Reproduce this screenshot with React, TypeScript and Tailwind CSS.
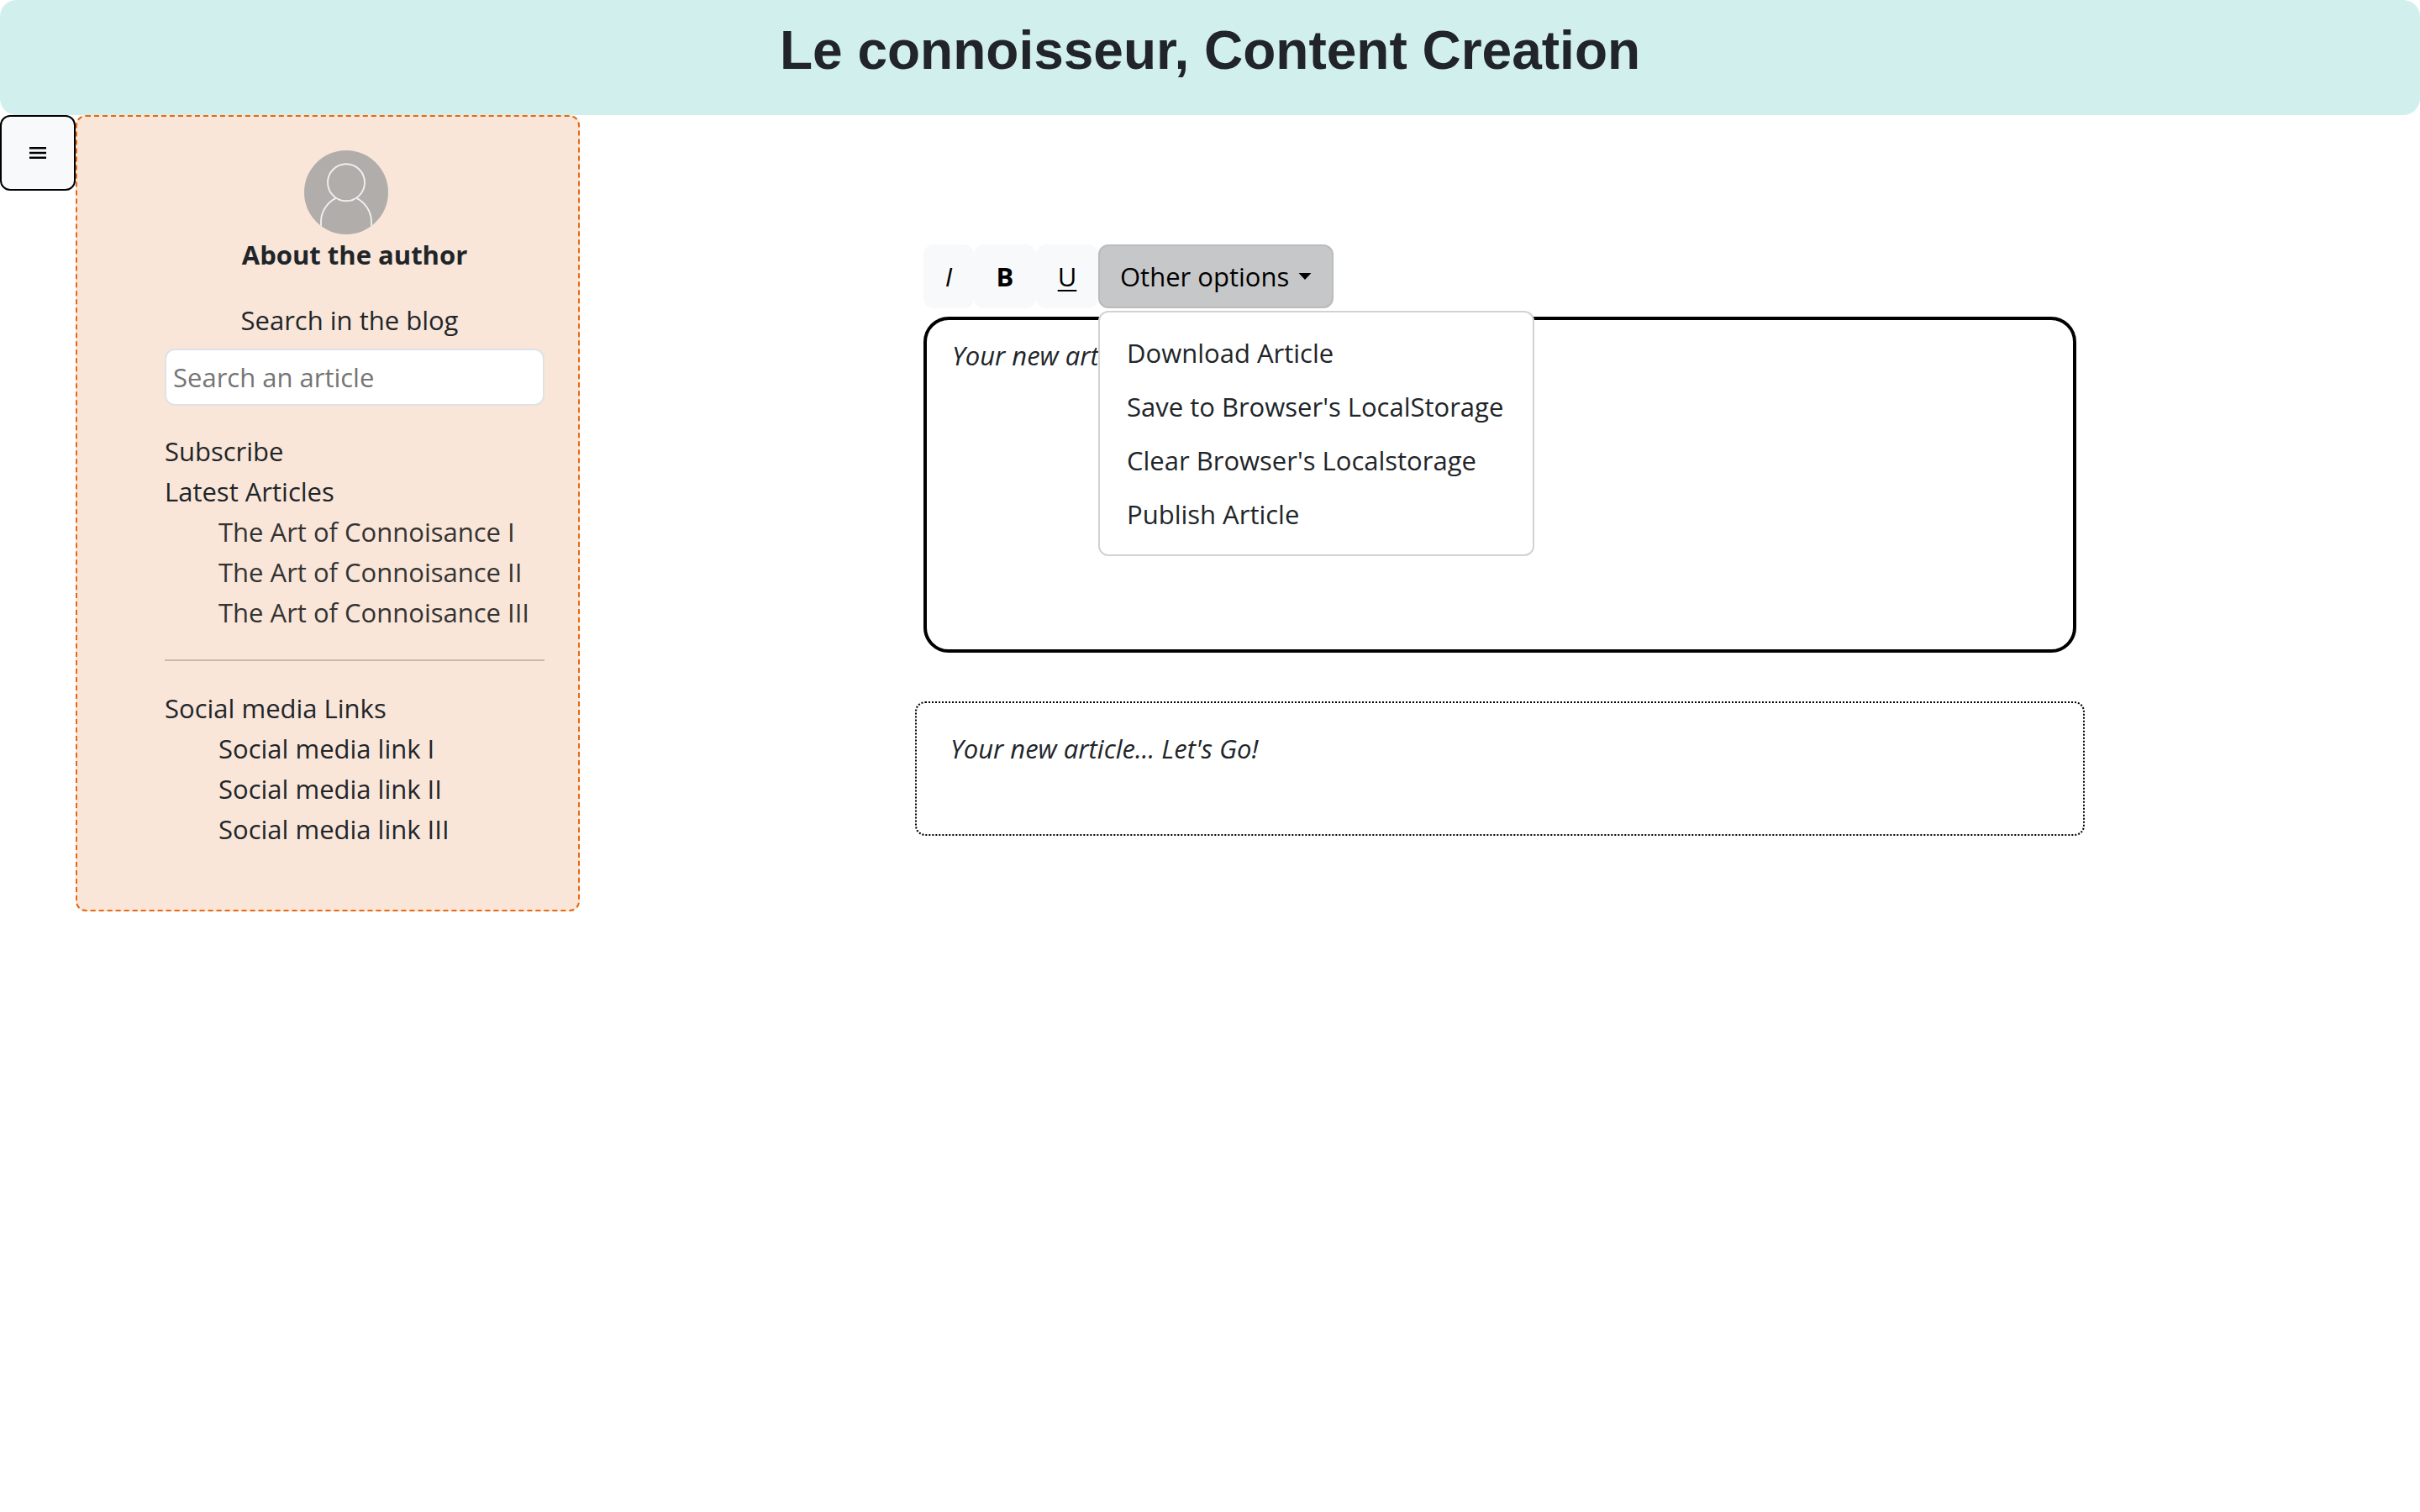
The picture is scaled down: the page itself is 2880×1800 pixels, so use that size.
import { useState } from "react";

const articles = [
  "The Art of Connoisance I",
  "The Art of Connoisance II",
  "The Art of Connoisance III",
];

const socialLinks = [
  "Social media link I",
  "Social media link II",
  "Social media link III",
];

const menuItems = [
  "Download Article",
  "Save to Browser's LocalStorage",
  "Clear Browser's Localstorage",
  "Publish Article",
];

function MenuIcon() {
  return (
    <svg width="20" height="14" viewBox="0 0 20 14" aria-hidden="true">
      <path d="M0 1.3H20M0 7H20M0 12.7H20" stroke="black" strokeWidth="2.4" />
    </svg>
  );
}

function Avatar() {
  return (
    <svg width="100" height="100" viewBox="0 0 100 100" aria-hidden="true">
      <defs>
        <clipPath id="avatar-disc">
          <circle cx="50" cy="50" r="50" />
        </clipPath>
      </defs>
      <g clipPath="url(#avatar-disc)">
        <rect width="100" height="100" fill="#b0adaa" />
        <g fill="none" stroke="#f1f0ef" strokeWidth="1.9">
          <circle cx="50" cy="38.3" r="22" />
          <path d="M38 56.7C27 62.5 20 73 20 85V100" />
          <path d="M62 56.7C73 62.5 80 73 80 85V100" />
        </g>
      </g>
    </svg>
  );
}

function Sidebar() {
  return (
    <aside className="w-[600px] shrink-0 rounded-xl border-2 border-dashed border-[#e8680f] bg-[#f9e6d9] p-10 pl-[104px]">
      <div className="flex flex-col items-center">
        <div className="pr-5">
          <Avatar />
        </div>
        <a href="#author" className="font-bold">
          About the author
        </a>
      </div>
      <form className="mt-[30px] flex flex-col" onSubmit={(e) => e.preventDefault()}>
        <label htmlFor="search" className="pr-3 text-center">
          Search in the blog
        </label>
        <input
          id="search"
          type="search"
          placeholder="Search an article"
          className="mt-2.5 h-[68px] w-full rounded-xl border-2 border-[#dee2e6] bg-white px-2 placeholder:text-[#757575]"
        />
      </form>
      <nav className="mt-[30px]">
        <a href="#subscribe" className="block">
          Subscribe
        </a>
        <p>Latest Articles</p>
        <ul className="pl-16 text-[#333333]">
          {articles.map((title) => (
            <li key={title} className="whitespace-nowrap">
              <a href="#article">{title}</a>
            </li>
          ))}
        </ul>
        <hr className="my-8 border-t-2 border-[#c8b9b0]" />
        <p>Social media Links</p>
        <ul className="mb-8 pl-16">
          {socialLinks.map((title) => (
            <li key={title}>
              <a href="#social">{title}</a>
            </li>
          ))}
        </ul>
      </nav>
    </aside>
  );
}

function Toolbar() {
  const [open, setOpen] = useState(true);
  return (
    <div className="flex h-[76px] text-black">
      <button type="button" className="w-15 rounded-xl bg-[#f8f9fa] italic">
        I
      </button>
      <button type="button" className="w-[74px] rounded-xl bg-[#f8f9fa] font-bold">
        B
      </button>
      <button
        type="button"
        className="w-[74px] rounded-xl bg-[#f8f9fa] underline decoration-2 underline-offset-4"
      >
        U
      </button>
      <div className="relative">
        <button
          type="button"
          aria-expanded={open}
          onClick={() => setOpen(!open)}
          className="flex h-full w-[280px] items-center justify-between rounded-xl border-2 border-[#babbbc] bg-[#c6c7c8] px-6"
        >
          Other options
          <svg width="16" height="8" viewBox="0 0 16 8" aria-hidden="true">
            <path d="M0.500 0H15.500L8 8Z" fill="black" />
          </svg>
        </button>
        {open && (
          <ul className="absolute top-full left-0 z-10 mt-[3px] w-[519px] rounded-xl border-2 border-[#d2d2d2] bg-white py-4 text-[#212529]">
            {menuItems.map((item) => (
              <li key={item}>
                <button type="button" className="w-full px-8 py-2 text-left whitespace-nowrap">
                  {item}
                </button>
              </li>
            ))}
          </ul>
        )}
      </div>
    </div>
  );
}

export default function App() {
  const [text, setText] = useState("Your new article... Let's Go!");
  return (
    <div className="min-h-screen bg-white font-['Open_Sans',sans-serif] text-[31px] leading-[48px] text-[#212529]">
      <header className="rounded-[20px] bg-[#d1efed] pt-[22px] pb-[38px] text-center">
        <h1 className="font-['Liberation_Sans',sans-serif] text-[64px] leading-[77px] font-bold">
          Le connoisseur, Content Creation
        </h1>
      </header>
      <div className="flex items-start">
        <button
          type="button"
          aria-label="Toggle sidebar"
          className="flex h-[90px] w-[90px] shrink-0 items-center justify-center rounded-xl border-2 border-black bg-[#f8f9fa]"
        >
          <MenuIcon />
        </button>
        <Sidebar />
        <main className="min-w-0 flex-1 pt-[154px]">
          <div className="mx-auto w-full max-w-[1392px]">
            <div className="px-2.5">
              <Toolbar />
              <textarea
                aria-label="Article"
                value={text}
                onChange={(e) => setText(e.target.value)}
                className="mt-2.5 block h-[400px] w-full resize-none rounded-[30px] border-4 border-black bg-white px-[30px] py-[18px] italic outline-none"
              />
            </div>
            <section
              aria-label="Preview"
              className="mt-[58px] min-h-40 rounded-xl border-2 border-dotted border-black px-10 py-[30px] italic"
            >
              {text}
            </section>
          </div>
        </main>
      </div>
    </div>
  );
}
